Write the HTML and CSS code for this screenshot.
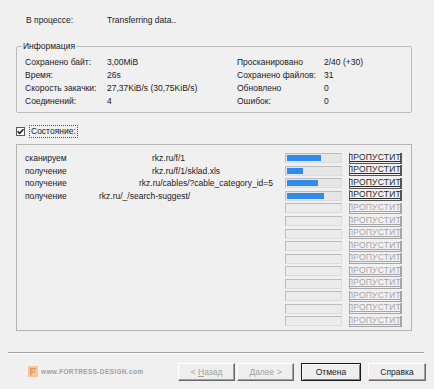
FILE: index.html
```html
<!DOCTYPE html>
<html lang="ru">
<head>
    <meta charset="UTF-8">
    <title>Загрузка</title>
    <link rel="stylesheet" href="styles.css">
</head>
<body>
    <div class="dialog">
        <div class="process-row">
            <span class="process-label">В процессе:</span>
            <span>Transferring data..</span>
        </div>

        <fieldset class="info">
            <legend>Информация</legend>
            <div class="info-grid">
                <span>Сохранено байт:</span><span>3,00MiB</span>
                <span>Просканировано</span><span>2/40 (+30)</span>
                <span>Время:</span><span>26s</span>
                <span>Сохранено файлов:</span><span>31</span>
                <span>Скорость закачки:</span><span>27,37KiB/s (30,75KiB/s)</span>
                <span>Обновлено</span><span>0</span>
                <span>Соединений:</span><span>4</span>
                <span>Ошибок:</span><span>0</span>
            </div>
        </fieldset>

        <label class="check-row">
            <span class="checkbox">
                <svg width="7" height="7" viewBox="0 0 7 7"><path d="M0.5 3.2 L2.6 5.4 L6.5 1.2" fill="none" stroke="#1a1a1a" stroke-width="1.6"/></svg>
            </span>
            <span class="focus-label">Состояние:</span>
        </label>

        <div class="status-box">
            <div class="status-row">
                <span>сканируем</span>
                <span class="url indent-53">rkz.ru/f/1</span>
                <span class="bar"><span class="fill" style="width: 64%"></span></span>
                <span class="skip">ПРОПУСТИТЬ</span>
            </div>
            <div class="status-row">
                <span>получение</span>
                <span class="url indent-53">rkz.ru/f/1/sklad.xls</span>
                <span class="bar"><span class="fill" style="width: 30%"></span></span>
                <span class="skip">ПРОПУСТИТЬ</span>
            </div>
            <div class="status-row">
                <span>получение</span>
                <span class="url indent-40">rkz.ru/cables/?cable_category_id=5</span>
                <span class="bar"><span class="fill" style="width: 58%"></span></span>
                <span class="skip">ПРОПУСТИТЬ</span>
            </div>
            <div class="status-row">
                <span>получение</span>
                <span class="url">rkz.ru/_/search-suggest/</span>
                <span class="bar"><span class="fill" style="width: 70%"></span></span>
                <span class="skip">ПРОПУСТИТЬ</span>
            </div>
            <div class="status-row idle"><span></span><span></span><span class="bar"></span><span class="skip">ПРОПУСТИТЬ</span></div>
            <div class="status-row idle"><span></span><span></span><span class="bar"></span><span class="skip">ПРОПУСТИТЬ</span></div>
            <div class="status-row idle"><span></span><span></span><span class="bar"></span><span class="skip">ПРОПУСТИТЬ</span></div>
            <div class="status-row idle"><span></span><span></span><span class="bar"></span><span class="skip">ПРОПУСТИТЬ</span></div>
            <div class="status-row idle"><span></span><span></span><span class="bar"></span><span class="skip">ПРОПУСТИТЬ</span></div>
            <div class="status-row idle"><span></span><span></span><span class="bar"></span><span class="skip">ПРОПУСТИТЬ</span></div>
            <div class="status-row idle"><span></span><span></span><span class="bar"></span><span class="skip">ПРОПУСТИТЬ</span></div>
            <div class="status-row idle"><span></span><span></span><span class="bar"></span><span class="skip">ПРОПУСТИТЬ</span></div>
            <div class="status-row idle"><span></span><span></span><span class="bar"></span><span class="skip">ПРОПУСТИТЬ</span></div>
            <div class="status-row idle"><span></span><span></span><span class="bar"></span><span class="skip">ПРОПУСТИТЬ</span></div>
        </div>

        <div class="separator"></div>

        <div class="footer">
            <div class="logo">
                <svg width="10" height="11" viewBox="0 0 10 11">
                    <rect width="10" height="11" fill="#f2c7a0"/>
                    <path d="M2 2 H8 V3.5 H3.5 V5 H7 V6.5 H3.5 V9.5 H2 Z" fill="#e39a5c"/>
                </svg>
                <span class="logo-text">www.FORTRESS-DESIGN.com</span>
            </div>
            <div class="buttons">
                <button class="btn" disabled>&lt; <u>Н</u>азад</button>
                <button class="btn btn-next" disabled><u>Д</u>алее &gt;</button>
                <button class="btn btn-default">Отмена</button>
                <button class="btn btn-help">Справка</button>
            </div>
        </div>
    </div>
</body>
</html>
```

FILE: styles.css
```css
body {
    margin: 0;
    background-color: #f0f0f0;
    font-family: "Liberation Sans", Arial, sans-serif;
    font-size: 8.5px;
    color: #1a1a1a;
}
.dialog {
    width: 434px;
    height: 389px;
    padding-top: 14px;
    box-sizing: border-box;
}
.process-row {
    display: flex;
    padding-left: 26px;
    line-height: 13px;
}
.process-label {
    width: 81px;
}
.info {
    margin: 13px 22px 0 16px;
    padding: 4px 8px 4px 8px;
    border: 1px solid #bcbcbc;
    border-radius: 2px;
}
.info legend {
    margin-left: -3px;
    padding: 0 1px;
    line-height: 12px;
}
.info-grid {
    display: grid;
    grid-template-columns: 82px 130px 87px auto;
    line-height: 13px;
}
.check-row {
    display: flex;
    align-items: center;
    margin: 12px 0 0 16px;
    height: 13px;
}
.checkbox {
    display: flex;
    align-items: center;
    justify-content: center;
    width: 7px;
    height: 7px;
    border: 1px solid #5a5a5a;
    background-color: #fff;
}
.focus-label {
    margin-left: 4px;
    padding: 0 1px;
    line-height: 11px;
    border: 1px dotted #555;
}
.status-box {
    margin: 6px 22px 0 16px;
    padding: 7px 9px 2px 8px;
    border: 1px solid #b4b4b4;
}
.status-row {
    display: grid;
    grid-template-columns: 74px 186px 57px 53px;
    column-gap: 0;
    align-items: center;
    height: 12.55px;
}
.url {
    white-space: nowrap;
}
.indent-53 {
    padding-left: 53px;
}
.indent-40 {
    padding-left: 40px;
}
.bar {
    display: block;
    width: 57px;
    height: 10px;
    box-sizing: border-box;
    margin-left: 0;
    border: 1px solid #bcbcbc;
    border-right-color: #dcdcdc;
    border-bottom-color: #dcdcdc;
    background-color: #e6e6e6;
    padding: 1px;
}
.fill {
    display: block;
    height: 100%;
    background-color: #2f8cec;
}
.idle .bar {
    background-color: #ececec;
}
.skip {
    display: block;
    width: 53px;
    height: 11px;
    box-sizing: border-box;
    margin-left: 7px;
    overflow: hidden;
    white-space: nowrap;
    text-indent: -3px;
    line-height: 9px;
    font-size: 8.5px;
    letter-spacing: 0.2px;
    color: #2a2a2a;
    border-left: 1px solid #555;
    border-right: 2px solid #555;
    border-bottom: 1px solid #555;
    text-decoration: underline;
}
.status-row .skip {
    grid-column: 4;
}
.idle .skip {
    color: #a6a6a6;
    border-color: #a6a6a6;
}
.separator {
    margin: 21px 10px 0 8px;
    border-top: 1px solid #a0a0a0;
    border-bottom: 1px solid #fff;
}
.footer {
    display: flex;
    align-items: center;
    justify-content: space-between;
    margin-top: 9px;
    padding: 0 8px 0 28px;
}
.logo {
    display: flex;
    align-items: center;
    gap: 3px;
}
.logo-text {
    font-size: 6.5px;
    letter-spacing: 0.35px;
    color: #a0a0a0;
    font-weight: bold;
}
.buttons {
    display: flex;
}
.btn {
    width: 57px;
    height: 18px;
    padding: 0;
    font-family: inherit;
    font-size: 8.5px;
    color: #1a1a1a;
    background-color: #efefef;
    border: 1px solid;
    border-color: #fff #696969 #696969 #fff;
    box-shadow: inset -1px -1px 0 #a0a0a0;
}
.btn:disabled {
    color: #a0a0a0;
}
.btn-next {
    margin-left: 2px;
}
.btn-default {
    width: 60px;
    margin-left: 7px;
    border-color: #1a1a1a;
    box-shadow: inset 1px 1px 0 #fff, inset -1px -1px 0 #808080;
}
.btn-help {
    width: 58px;
    margin-left: 7px;
}
```
